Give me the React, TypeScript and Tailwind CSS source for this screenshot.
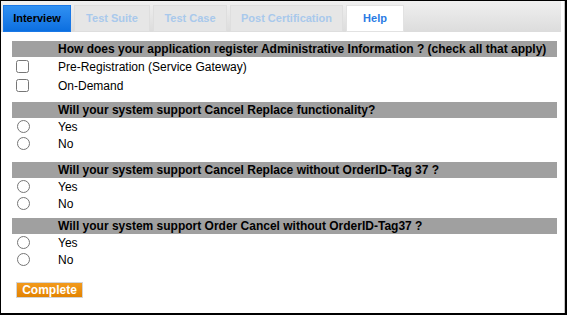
const tabs = [
  { label: "Interview", w: "w-[68px]", kind: "active" },
  { label: "Test Suite", w: "w-[76px]", kind: "off" },
  { label: "Test Case", w: "w-[74px]", kind: "off" },
  { label: "Post Certification", w: "w-[113px]", kind: "off" },
  { label: "Help", w: "w-[58px]", kind: "help" },
];

const Heading = ({ text, className = "" }: { text: string; className?: string }) => (
  <div className={`h-[16px] leading-[16px] pl-[46px] bg-[#a0a0a0] text-[12px] font-bold text-black whitespace-nowrap ${className}`}>
    {text}
  </div>
);

const CheckRow = ({ label }: { label: string }) => (
  <label className="flex items-center h-[19px] text-[12px] text-black">
    <span className="w-[46px] flex items-center pl-[4px]">
      <input type="checkbox" className="m-0 w-[13px] h-[13px]" />
    </span>
    {label}
  </label>
);

const RadioRow = ({ name, label }: { name: string; label: string }) => (
  <label className="flex items-center h-[17px] text-[12px] text-black">
    <span className="w-[46px] flex items-center pl-[5px]">
      <input type="radio" name={name} className="m-0 w-[13px] h-[13px]" />
    </span>
    {label}
  </label>
);

const App = () => {
  return (
    <div className="w-[567px] h-[315px] bg-white border-t border-l border-r-2 border-b-2 border-black overflow-hidden font-['Liberation_Sans',Arial,sans-serif]">
      <div className="h-full border-r border-[#c4c4c4]">
        <div className="w-[560px] h-[31px] flex items-end gap-[3px] pl-[2px] bg-gradient-to-b from-[#f0f0f0] to-[#dcdcdc]">
          {tabs.map((t) => (
            <div
              key={t.label}
              className={`${t.w} h-[27px] flex items-center justify-center text-[11px] font-bold border ${
                t.kind === "active"
                  ? "bg-gradient-to-b from-[#2f90f2] to-[#0b6fe0] border-[#1a78e6] text-black"
                  : t.kind === "help"
                  ? "bg-white border-[#e2e2e2] text-[#2a7be4]"
                  : "bg-[#e6e6e6] border-[#dedede] text-[#a9c9ec]"
              }`}
            >
              {t.label}
            </div>
          ))}
        </div>

        <div className="pl-[11px] w-[556px] pt-[9px]">
          <Heading text="How does your application register Administrative Information ? (check all that apply)" />
          <CheckRow label="Pre-Registration (Service Gateway)" />
          <CheckRow label="On-Demand" />

          <Heading className="mt-[7px]" text="Will your system support Cancel Replace functionality?" />
          <RadioRow name="q2" label="Yes" />
          <RadioRow name="q2" label="No" />

          <Heading className="mt-[10px]" text="Will your system support Cancel Replace without OrderID-Tag 37 ?" />
          <RadioRow name="q3" label="Yes" />
          <RadioRow name="q3" label="No" />

          <Heading className="mt-[6px]" text="Will your system support Order Cancel without OrderID-Tag37 ?" />
          <RadioRow name="q4" label="Yes" />
          <RadioRow name="q4" label="No" />

          <button className="mt-[14px] ml-[4px] w-[67px] h-[16px] flex items-center justify-center border border-[#d4d4d4] bg-gradient-to-b from-[#f29a1c] to-[#e38300] text-white text-[12px] font-bold leading-none">
            Complete
          </button>
        </div>
      </div>
    </div>
  );
};

export default App;
